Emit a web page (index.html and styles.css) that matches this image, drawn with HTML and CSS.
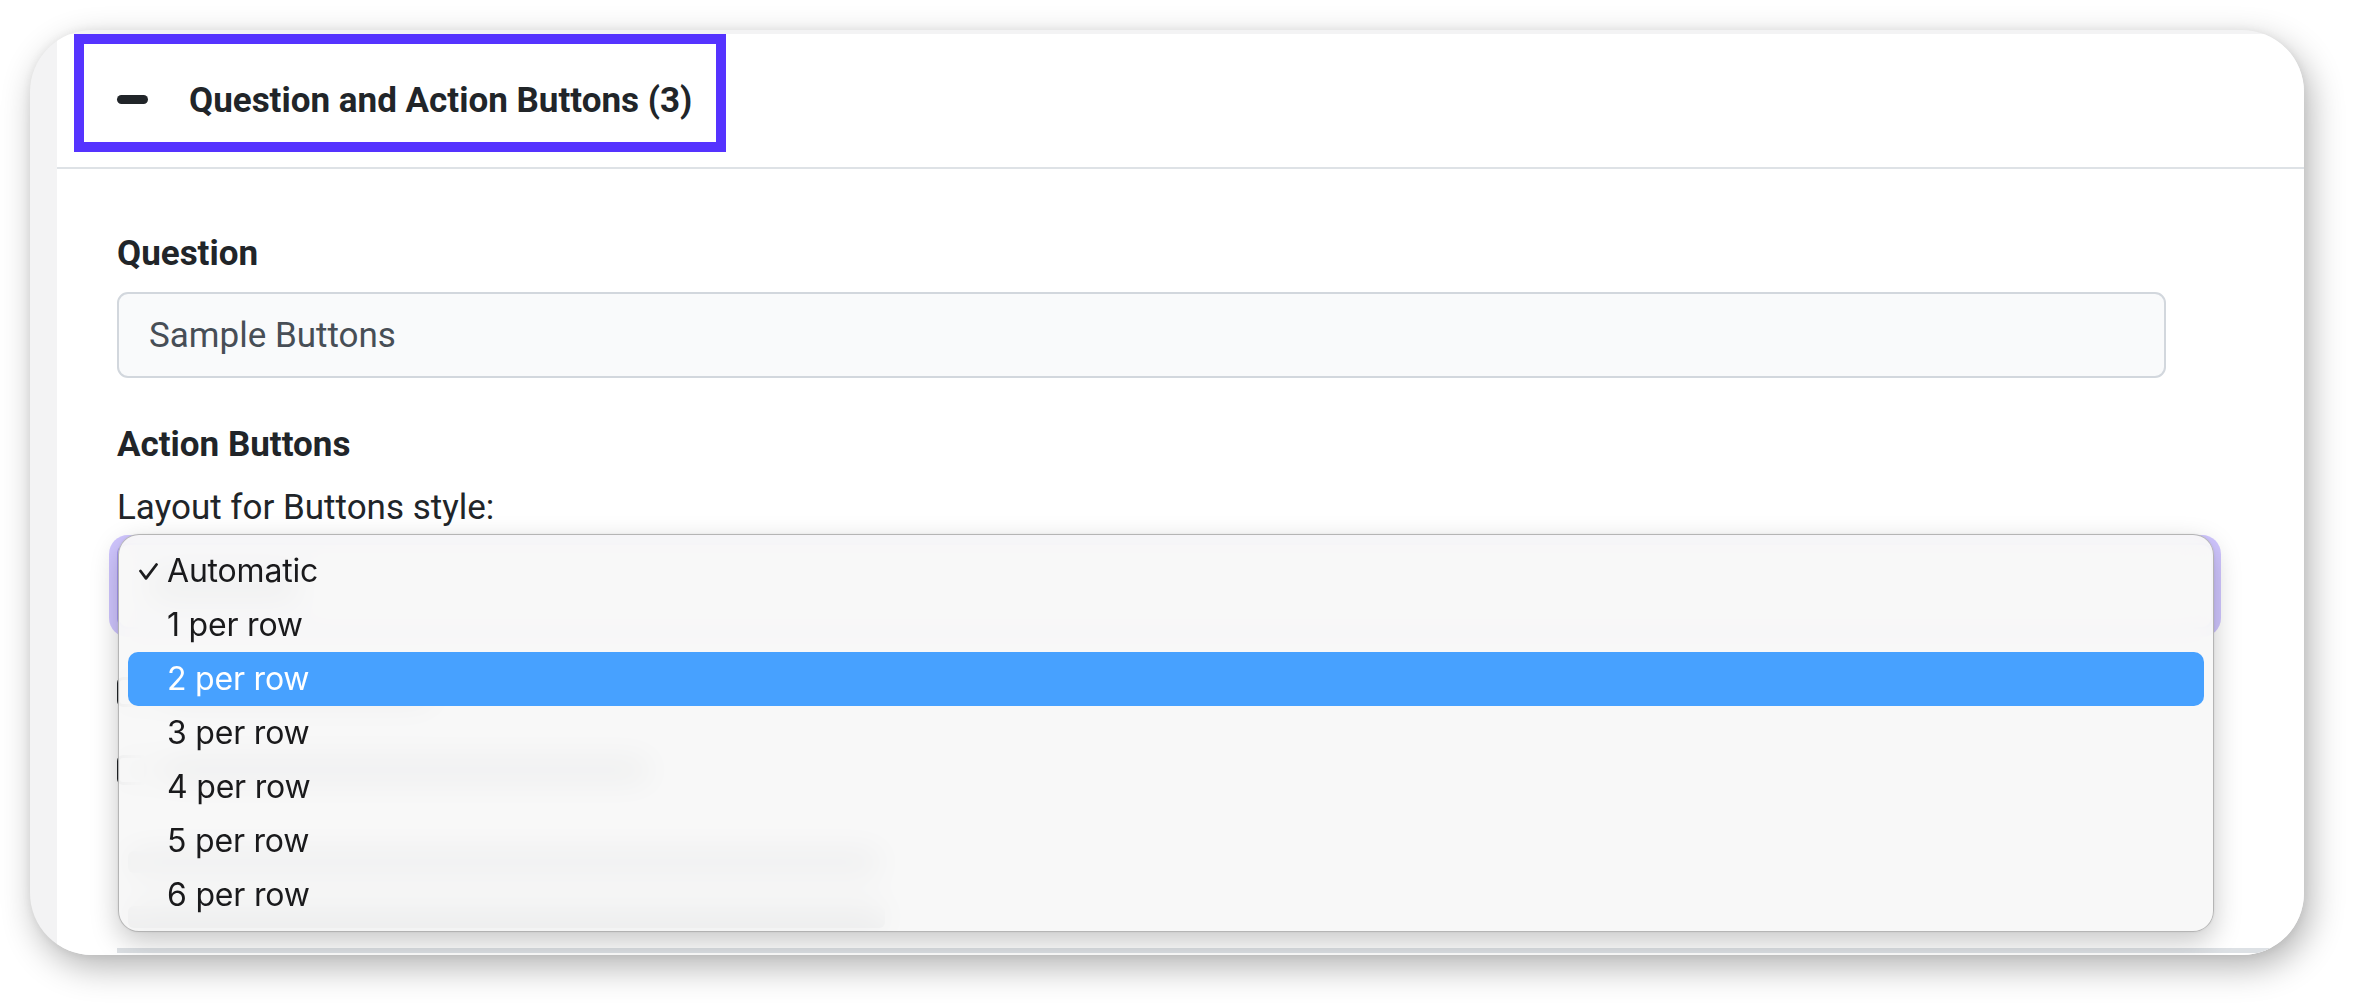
FILE: index.html
```html
<!DOCTYPE html>
<html lang="en">
<head>
<meta charset="utf-8">
<title>Question and Action Buttons</title>
<link rel="stylesheet" href="styles.css">
</head>
<body>
<div class="frame">
  <div class="page">
    <div class="acc-header">
      <button class="acc-toggle" type="button">
        <span class="minus"></span>
        <span class="acc-title">Question and Action Buttons (3)</span>
      </button>
    </div>
    <div class="acc-body">
      <div class="field-label">Question</div>
      <div class="text-input">Sample Buttons</div>

      <div class="field-label section-label">Action Buttons</div>
      <div class="sub-label">Layout for Buttons style:</div>

      <div class="select-wrap">
        <div class="select"><span class="bar select-value"></span></div>
        <div class="menu">
          <div class="menu-item"><span class="check-slot"><svg class="check" viewBox="0 0 19 17" width="19" height="17"><polyline points="1.5,8 7,15.3 17.5,1.5" fill="none" stroke="#1d1d1f" stroke-width="2.8" stroke-linecap="round" stroke-linejoin="round"/></svg></span>Automatic</div>
          <div class="menu-item"><span class="check-slot"></span>1 per row</div>
          <div class="menu-item active"><span class="check-slot"></span>2 per row</div>
          <div class="menu-item"><span class="check-slot"></span>3 per row</div>
          <div class="menu-item"><span class="check-slot"></span>4 per row</div>
          <div class="menu-item"><span class="check-slot"></span>5 per row</div>
          <div class="menu-item"><span class="check-slot"></span>6 per row</div>
        </div>
      </div>

      <div class="checks">
        <div class="check-row"><span class="box"></span><span class="bar bar-1"></span></div>
        <div class="check-row row-2"><span class="box"></span><span class="bar bar-2"></span></div>
        <div class="help"><span class="bar bar-3"></span><span class="bar bar-4"></span></div>
      </div>
      <div class="next-field"></div>
    </div>
  </div>
</div>
</body>
</html>
```

FILE: styles.css
```css
* { box-sizing: border-box; }

html, body {
  margin: 0;
  padding: 0;
  background: #ffffff;
}

body {
  font-family: Roboto, "Liberation Sans", sans-serif;
  color: #212529;
  width: 2356px;
  height: 1008px;
  overflow: hidden;
}

.frame {
  margin: 30px 0 0 30px;
  width: 2274px;
  height: 925px;
  border-radius: 62px;
  overflow: hidden;
  background: #f3f3f4;
  box-shadow: 6px 12px 34px rgba(0, 0, 0, 0.30), 0 0 10px rgba(0, 0, 0, 0.06);
}

.page {
  margin: 4px 0 0 27px;
  background: #ffffff;
  height: 1000px;
}

/* Accordion header */
.acc-header {
  height: 135px;
  border-bottom: 2px solid #dee2e6;
}

.acc-toggle {
  margin: 0 0 0 17px;
  width: 652px;
  height: 118px;
  border: 10px solid #5533ff;
  background: #ffffff;
  padding: 16px 0 0 33px;
  display: flex;
  align-items: center;
  font: inherit;
  color: inherit;
  cursor: pointer;
}

.minus {
  width: 31px;
  height: 9px;
  border-radius: 4.5px;
  background: #212529;
  margin: 0 41px 4px 0;
  flex: none;
}

.acc-title {
  font-weight: 700;
  font-size: 35px;
  line-height: 52.5px;
  white-space: nowrap;
}

/* Body */
.acc-body {
  padding: 59px 0 0 60px;
}

.field-label {
  font-weight: 700;
  font-size: 35px;
  line-height: 52.5px;
  margin-bottom: 11.5px;
}

.section-label {
  margin-top: 41px;
  margin-bottom: 0;
}

.sub-label {
  font-size: 35px;
  line-height: 52.5px;
  margin-top: 10px;
}

.text-input {
  width: 2049px;
  height: 86px;
  border: 2px solid #d2d7dd;
  border-radius: 11px;
  background: #f9fafb;
  padding: 0 30px;
  display: flex;
  align-items: center;
  font-size: 35px;
  color: #474e56;
}

.select-wrap {
  position: relative;
  margin-top: 9px;
  width: 2096px;
}

.select {
  height: 86px;
  border: 2px solid #a99bf5;
  border-radius: 11px;
  background: #ffffff;
  box-shadow: 0 0 0 8px rgba(85, 51, 255, 0.28);
  padding: 0 30px;
  display: flex;
  align-items: center;
}

.select-value {
  width: 150px;
  height: 22px;
  background: #6a6f75;
}

/* Native popup menu */
.menu {
  position: absolute;
  left: 1px;
  top: -9px;
  width: 2096px;
  height: 398px;
  padding: 9px;
  border: 1px solid rgba(0, 0, 0, 0.27);
  border-radius: 21px;
  background: rgba(248, 248, 248, 0.93);
  -webkit-backdrop-filter: blur(16px);
  backdrop-filter: blur(16px);
  box-shadow: 0 10px 28px rgba(0, 0, 0, 0.22), 0 0 3px rgba(0, 0, 0, 0.08);
  z-index: 5;
  font-family: Inter, "Noto Sans", sans-serif;
  font-size: 32px;
  color: #1a1a1c;
}

.menu-item {
  height: 54px;
  line-height: 54px;
  border-radius: 10px;
  display: flex;
  align-items: center;
  padding-left: 11px;
  white-space: nowrap;
  letter-spacing: -0.2px;
}

.menu-item.active {
  background: #47a1ff;
  color: #ffffff;
}

.check-slot {
  width: 28px;
  height: 54px;
  display: flex;
  align-items: center;
  flex: none;
}

.check {
  display: block;
  margin-top: 1px;
}

/* Form content lying beneath the popup */
.checks {
  margin-top: 48px;
}

.check-row {
  display: flex;
  align-items: center;
  gap: 14px;
  height: 30px;
  margin-bottom: 48px;
}

.row-2 {
  margin-bottom: 66px;
}

.box {
  width: 30px;
  height: 30px;
  border: 3px solid #212529;
  border-radius: 6px;
  flex: none;
}

.bar {
  display: block;
  height: 22px;
  border-radius: 6px;
  background: #5d6268;
}

.bar-1 { width: 272px; }
.bar-2 { width: 488px; }

.help {
  display: flex;
  flex-direction: column;
  gap: 33px;
  padding-left: 11px;
}

.bar-3 { width: 752px; }
.bar-4 { width: 757px; }

.next-field {
  margin-top: 20px;
  width: 2300px;
  height: 80px;
  border-top: 5px solid #dde1e5;
}
```
